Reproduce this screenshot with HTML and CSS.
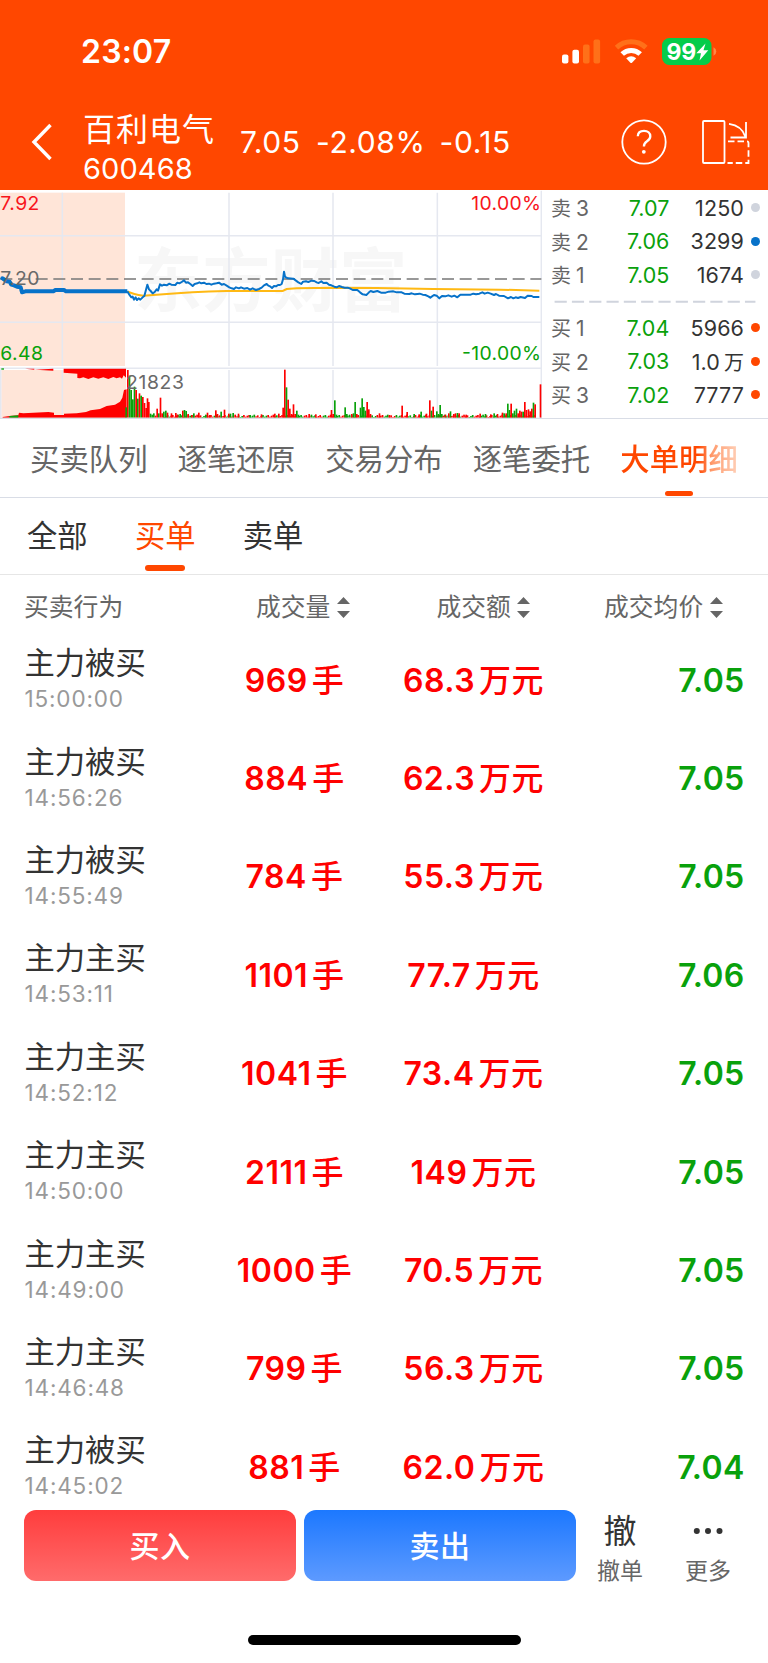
FILE: index.html
```html
<!DOCTYPE html>
<html lang="zh-CN">
<head>
<meta charset="utf-8">
<title>百利电气 600468</title>
<link rel="stylesheet" href="styles.css">
</head>
<body>
<div class="screen">
  <header class="header">
    <div class="status">
      <span class="clock">23:07</span>
      <svg class="status-icons" width="156" height="28" viewBox="0 0 156 28">
        <g fill="#fff"><rect x="0" y="16.500" width="6.400" height="9" rx="2"/><rect x="10.400" y="11.800" width="6.600" height="13.700" rx="2"/></g>
        <g fill="#ff7019"><rect x="21" y="6.500" width="6.600" height="19" rx="2"/><rect x="31.500" y="1.500" width="6.600" height="24" rx="2"/></g>
        <g fill="none" stroke-width="5">
          <path d="M54.500 9.600A21.500 21.500 0 0 1 83.900 9.600" stroke="#ff7019"/>
          <path d="M60.200 16A13 13 0 0 1 78.200 16" stroke="#fff"/>
        </g>
        <path d="M64.200 20.300Q69.200 16 74.200 20.300L70 24.800Q69.200 25.400 68.400 24.800Z" fill="#fff"/>
        <rect x="100" y="0" width="49.500" height="27" rx="7.500" fill="#05cc4a"/>
        <path d="M151.500 9.300Q154.300 10.500 154.300 13.500T151.500 17.700Z" fill="#ff8a45"/>
        <text x="104.600" y="22.300" class="battery-text" textLength="29.500">99</text>
        <path d="M143.500 5.500L134.300 15.300H139L137.500 22.500L146.300 12.200H141.500Z" fill="#fff"/>
      </svg>
    </div>
    <div class="nav">
      <svg class="back" width="22" height="38" viewBox="0 0 22 38"><path d="M19.500 2L3 19L19.500 36" fill="none" stroke="#fff" stroke-width="3.400"/></svg>
      <div class="stock"><div class="stock-name">百利电气</div><div class="stock-code">600468</div></div>
      <div class="quote"><span class="q-price">7.05</span><span class="q-rate">-2.08%</span><span class="q-diff">-0.15</span></div>
      <svg class="help" width="46" height="46" viewBox="0 0 46 46"><circle cx="23" cy="23" r="21.700" fill="none" stroke="#fff" stroke-width="1.800"/><path d="M16.800 17.200C17 13.600 19.500 11.900 23 11.900C26.700 11.900 29.300 14.200 29.300 17.300C29.300 19.700 28 21 26 22.300C23.700 23.800 22.900 24.800 22.900 27.500" fill="none" stroke="#fff" stroke-width="2.300"/><circle cx="22.800" cy="32.800" r="1.900" fill="#fff"/></svg>
      <svg class="rotate" width="50" height="46" viewBox="0 0 50 46"><g fill="none" stroke="#fff" stroke-width="1.800"><rect x="2" y="2" width="21.500" height="42" rx="1"/><path d="M28 4.800Q41 6.500 44.500 18M45 3V18.500H29.500"/><path d="M27 22.300H46Q47.500 22.300 47.500 24V44H26.500" stroke-dasharray="6.500 3"/></g></svg>
    </div>
  </header>

  <section class="market">
    <svg class="chart" width="542" height="229" viewBox="0 12 1626 687">
      <rect x="0" y="20" width="375" height="520" fill="#ffe5d8"/>
      <rect x="4" y="552" width="374" height="143" fill="#ffe5d8"/>
      <text class="mark" x="402" y="360" textLength="820" lengthAdjust="spacingAndGlyphs">东方财富</text>
      <path class="grid" d="M0 149H1623M0 409H1623M0 547H1623M187 20V540M687 20V540M999 20V540M1312 20V540M187 552V695M687 552V695M999 552V695M1312 552V695M1624 14V697M2 550V697"/>
      <path d="M1 279H1624" stroke="#777" stroke-width="4" stroke-dasharray="36 17" fill="none"/>
      <g id="volume"></g>
      <path d="M0 697H1626" class="grid-strong"/>
      <path class="average" d="M382 316Q400 325 430 329Q460 328 490 325Q570 318 680 315H848L860 309L890 307L1000 305L1130 306L1300 309L1500 311L1618 314"/>
      <path class="price" d="M382 316L388 326L394 334L398 332L402 341L407 334L411 342L416 337L421 341L428 334L433 330L442 296L447 310L452 315L458 322L464 318L470 310L474 314L480 295L486 299L492 296L500 298L508 293L514 296L526 297L532 290L538 292L545 288L552 283L558 290L564 289L571 294L578 300L584 294L592 292L598 289L604 292L612 290L619 294L627 293L634 296L642 293L650 292L657 290L665 296L672 294L680 299L688 304L695 307L702 309L708 304L717 307L723 304L732 308L742 306L750 311L758 307L768 312L777 309L785 305L792 298L800 294L805 299L810 301L816 306L822 300L828 301L834 297L840 297L845 294L849 280L852 257L855 272L858 274L864 277L880 278L888 284L895 289L904 294L909 287L918 286L925 288L935 284L943 285L950 289L956 291L964 286L970 291L980 290L987 296L994 298L1003 302L1010 304L1017 300L1026 303L1034 305L1043 305L1051 308L1058 312L1072 312L1080 319L1088 325L1099 327L1107 319L1112 315L1120 318L1132 315L1143 320L1157 320L1166 317L1180 316L1190 319L1205 319L1213 323L1228 324L1235 322L1245 325L1259 323L1268 326L1276 327L1285 331L1291 335L1302 327L1310 329L1318 337L1326 330L1336 331L1345 328L1355 332L1363 329L1372 334L1381 326L1397 326L1412 326L1420 323L1428 325L1438 323L1447 319L1454 323L1463 320L1472 323L1482 327L1488 324L1497 329L1512 330L1524 337L1533 333L1540 337L1547 334L1554 336L1562 333L1575 336L1583 329L1595 330L1600 333L1618 333"/>
      <path class="pre" d="M8 277L20 286L29 287L34 296L42 298L51 302L62 304L66 319L76 316H160L166 312H192L198 316H382"/>
      <circle cx="7" cy="277" r="6" fill="#0772c9"/>
      <g class="axis">
        <text x="1" y="71" textLength="117" fill="#f8151c">7.92</text>
        <text x="1" y="296" textLength="117" fill="#696969">7.20</text>
        <text x="1" y="523" textLength="128" fill="#09a10b">6.48</text>
        <text x="1414" y="71" textLength="209" fill="#f8151c">10.00%</text>
        <text x="1386" y="523" textLength="237" fill="#09a10b">-10.00%</text>
        <text x="378" y="608" textLength="174" fill="#696969">21823</text>
      </g>
    </svg>
    <div class="book">
      <div class="level"><span class="side">卖<i>3</i></span><span class="bid">7.07</span><span class="qty">1250</span><b class="dot"></b></div>
      <div class="level"><span class="side">卖<i>2</i></span><span class="bid">7.06</span><span class="qty">3299</span><b class="dot blue"></b></div>
      <div class="level"><span class="side">卖<i>1</i></span><span class="bid">7.05</span><span class="qty">1674</span><b class="dot"></b></div>
      <svg class="split" width="207" height="20" viewBox="0 0 207 20"><path d="M0 10H206" stroke="#d0d4dd" stroke-width="2" stroke-dasharray="12.500 5.250"/></svg>
      <div class="level"><span class="side">买<i>1</i></span><span class="bid">7.04</span><span class="qty">5966</span><b class="dot hot"></b></div>
      <div class="level"><span class="side">买<i>2</i></span><span class="bid">7.03</span><span class="qty">1.0<em>万</em></span><b class="dot hot"></b></div>
      <div class="level"><span class="side">买<i>3</i></span><span class="bid">7.02</span><span class="qty">7777</span><b class="dot hot"></b></div>
    </div>
  </section>

  <nav class="tabs">
    <span>买卖队列</span><span>逐笔还原</span><span>交易分布</span><span>逐笔委托</span><span class="active">大单明细</span>
  </nav>
  <nav class="filters"><span>全部</span><span class="active">买单</span><span>卖单</span></nav>

  <div class="thead">
    <span>买卖行为</span>
    <span class="sort">成交量<svg width="13" height="21" viewBox="0 0 13 21"><path d="M0 7L6.500 0L13 7ZM0 14H13L6.500 21Z" fill="#666"/></svg></span>
    <span class="sort">成交额<svg width="13" height="21" viewBox="0 0 13 21"><path d="M0 7L6.500 0L13 7ZM0 14H13L6.500 21Z" fill="#666"/></svg></span>
    <span class="sort">成交均价<svg width="13" height="21" viewBox="0 0 13 21"><path d="M0 7L6.500 0L13 7ZM0 14H13L6.500 21Z" fill="#666"/></svg></span>
  </div>
  <main class="list">
    <div class="row"><div class="act"><p>主力被买</p><time>15:00:00</time></div><div class="num">969<u>手</u></div><div class="num">68.3<u>万元</u></div><div class="avg">7.05</div></div>
    <div class="row"><div class="act"><p>主力被买</p><time>14:56:26</time></div><div class="num">884<u>手</u></div><div class="num">62.3<u>万元</u></div><div class="avg">7.05</div></div>
    <div class="row"><div class="act"><p>主力被买</p><time>14:55:49</time></div><div class="num">784<u>手</u></div><div class="num">55.3<u>万元</u></div><div class="avg">7.05</div></div>
    <div class="row"><div class="act"><p>主力主买</p><time>14:53:11</time></div><div class="num">1101<u>手</u></div><div class="num">77.7<u>万元</u></div><div class="avg">7.06</div></div>
    <div class="row"><div class="act"><p>主力主买</p><time>14:52:12</time></div><div class="num">1041<u>手</u></div><div class="num">73.4<u>万元</u></div><div class="avg">7.05</div></div>
    <div class="row"><div class="act"><p>主力主买</p><time>14:50:00</time></div><div class="num">2111<u>手</u></div><div class="num">149<u>万元</u></div><div class="avg">7.05</div></div>
    <div class="row"><div class="act"><p>主力主买</p><time>14:49:00</time></div><div class="num">1000<u>手</u></div><div class="num">70.5<u>万元</u></div><div class="avg">7.05</div></div>
    <div class="row"><div class="act"><p>主力主买</p><time>14:46:48</time></div><div class="num">799<u>手</u></div><div class="num">56.3<u>万元</u></div><div class="avg">7.05</div></div>
    <div class="row"><div class="act"><p>主力被买</p><time>14:45:02</time></div><div class="num">881<u>手</u></div><div class="num">62.0<u>万元</u></div><div class="avg">7.04</div></div>
  </main>

  <footer class="footer">
    <div class="btn buy">买入</div>
    <div class="btn sell">卖出</div>
    <div class="tool cancel"><span class="glyph">撤</span><span>撤单</span></div>
    <div class="tool more"><span class="glyph"><svg width="30" height="8" viewBox="0 0 30 8"><g fill="#333"><circle cx="3.800" cy="4" r="3"/><circle cx="15" cy="4" r="3"/><circle cx="26.500" cy="4" r="3"/></g></svg></span><span>更多</span></div>
  </footer>
  <div class="home"></div>
</div>
<script src="chart.js"></script>
</body>
</html>
```

FILE: styles.css
```css
* { box-sizing: border-box; }
body {
  margin: 0;
  background: #fff;
  color: #333;
  font-family: Inter, "Noto Sans CJK SC", sans-serif;
}
p { margin: 0; }
i, em { font-style: normal; }
u { text-decoration: none; }
.screen { width: 768px; height: 1663px; overflow: hidden; display: flex; flex-direction: column; background: #fff; }

.header { height: 190px; flex: none; background: #ff4700; color: #fff; }
.status { height: 102px; padding: 37px 50px 0 81px; display: flex; justify-content: space-between; align-items: flex-start; }
.clock { font-size: 32px; line-height: 30px; font-weight: 600; letter-spacing: .2px; }
.status-icons { margin-top: .5px; }
.battery-text { font: 700 23px Inter, sans-serif; fill: #fff; }
.nav { display: flex; height: 88px; align-items: flex-start; }
.back { margin: 21px 0 0 31px; }
.stock { margin: 10px 0 0 30px; width: 149px; }
.stock-name { font-size: 32px; line-height: 36px; letter-spacing: 1px; white-space: nowrap; }
.stock-code { font-size: 29px; line-height: 36px; margin-top: 3px; letter-spacing: .1px; }
.quote { display: flex; font-size: 30px; line-height: 36px; margin-top: 22px; width: 389px; padding-left: 8px; white-space: nowrap; letter-spacing: .6px; }
.q-price { width: 76px; }
.q-rate { width: 123.500px; }
.help { margin-top: 17px; }
.rotate { margin: 17px 0 0 34px; }

.market { height: 229px; flex: none; display: flex; }
.chart { flex: none; display: block; }
.grid { fill: none; stroke: #e5e8f0; stroke-width: 4.500; }
.grid-strong { fill: none; stroke: #dadde6; stroke-width: 3.500; }
.mark { font: 700 208px "Noto Sans CJK SC", sans-serif; fill: #f7f7f7; }
.average { fill: none; stroke: #ffb914; stroke-width: 6; }
.price { fill: none; stroke: #0772c9; stroke-width: 6; stroke-linejoin: round; }
.pre { fill: none; stroke: #0772c9; stroke-width: 12; stroke-linejoin: round; }
.axis { font: 400 58px Inter, sans-serif; }
.book { flex: 1; padding: 1px 7px 0 10px; border-bottom: 1px solid #d9dde6; }
.level { display: grid; grid-template-columns: 47px 70.500px 74.500px 15px; height: 33.5px; align-items: center; font-size: 21.5px; white-space: nowrap; }
.bid, .qty { letter-spacing: .1px; }
.side { color: #666; font-size: 20px; margin-left: -1px; }
.side i { margin-left: 5px; font-size: 21px; }
.bid { color: #09a10b; text-align: right; }
.qty { text-align: right; }
.qty em { font-size: 20px; margin-left: 4px; }
.dot { width: 9.400px; height: 9.400px; border-radius: 50%; background: #d0d4dd; justify-self: end; margin-right: -1px; }
.blue { background: #0772c9; }
.hot { background: #ff4700; }
.split { display: block; height: 19.500px; }

.tabs { height: 78.500px; flex: none; display: flex; gap: 30px; padding: 21px 0 0 30px; border-bottom: 1.500px solid #d9dde6; font-size: 29.400px; line-height: 40px; color: #666; white-space: nowrap; }
.tabs .active { position: relative; font-weight: 500; color: transparent; background: linear-gradient(90deg, #ff4700 66%, #ff9a6c 78%, #ffd0b8); background-clip: text; -webkit-background-clip: text; }
.tabs .active::after, .filters .active::after { content: ""; position: absolute; border-radius: 3px; background: #ff4700; }
.tabs .active::after { width: 28px; height: 4.500px; left: 45px; top: 51px; }
.filters { height: 77.500px; flex: none; display: flex; gap: 47.300px; padding: 18px 0 0 27px; border-bottom: 1px solid #e6e6e6; font-size: 30.300px; line-height: 40px; }
.filters .active { color: #ff4700; position: relative; }
.filters .active::after { width: 40px; height: 6.500px; left: 10.500px; top: 49px; }

.thead { height: 55px; flex: none; display: grid; grid-template-columns: 232px 180.500px 167.500px 1fr; padding: 0 0 0 24px; font-size: 24.800px; line-height: 65px; color: #666; }
.sort { display: flex; align-items: center; height: 65px; gap: 6.500px; }
.list { height: 877px; flex: none; overflow: hidden; }
.row { height: 98.400px; display: grid; grid-template-columns: 174px 191px 167px 1fr; align-items: center; padding: 0 23.500px 0 25px; }
.act { margin: -1px 0 0 -.5px; white-space: nowrap; }
.act p { font-size: 30.300px; line-height: 40px; }
.act time { display: block; font-size: 22.500px; line-height: 30px; color: #999; margin-top: 1px; letter-spacing: .85px; }
.num { color: #f00; font-size: 32px; font-weight: 600; line-height: 40px; justify-self: center; display: flex; white-space: nowrap; letter-spacing: .5px; margin: 3px -60px 0; }
.num u { font-size: 32px; margin-left: 4px; font-weight: 500; }
.avg { color: #09a10b; font-size: 32px; font-weight: 600; line-height: 40px; text-align: right; letter-spacing: .3px; margin-top: 3px; }

.footer { height: 80px; flex: none; padding: 3px 0 0 24px; display: flex; }
.btn { width: 272px; height: 71px; border-radius: 12px; margin-right: 8px; color: #fff; font-size: 30px; font-weight: 500; text-align: center; line-height: 72px; letter-spacing: .4px; }
.buy { background: linear-gradient(#ff3d3d, #ff6b6b); }
.sell { background: linear-gradient(#1c78ff, #5d9aff); }
.tool { width: 88px; display: flex; flex-direction: column; align-items: center; font-size: 23px; line-height: 38px; color: #666; }
.tool.cancel { margin-left: -8px; }
.cancel .glyph { color: #333; font-size: 33px; }
.glyph { height: 42px; flex: none; line-height: 42px; display: flex; align-items: center; }
.home { width: 273.500px; height: 10px; border-radius: 5px; background: #000; margin: 48px 0 0 247.500px; flex: none; }
```

FILE: chart.js
```js
// Volume panel: baseline y = 695, x and y in chart units.
var RED = '#fe0000', GREEN = '#09a10b', BASE = 695, STEP = 5.2;
var out = '';

function area(points, color) {
  out += '<polygon points="' + points + '" fill="' + color + '"/>';
}
function bar(x, top, color) {
  out += '<rect x="' + x.toFixed(1) + '" y="' + top + '" width="5" height="' + (BASE - top) + '" fill="' + color + '"/>';
}

// Call auction: matched volume below, unmatched volume hanging from the top
area('8,695 8,693 28,690 55,688 57,680 70,682 100,680 145,678 162,680 162,687 192,687 192,683 230,682 258,678 272,673 300,669 320,660 345,656 360,647 367,635 372,612 380,610 380,695', RED);
area('28,695 28,690 55,688 55,695', GREEN);
area('75,548 103,548 103,551 160,548 160,554 120,552 103,551', RED);
area('191,548 378,548 378,575 371,568 366,578 360,574 350,577 340,573 325,579 310,574 295,578 280,574 265,579 250,574 240,577 232,576 232,563 191,560', RED);
area('4,547 12,547 12,551 4,551', GREEN);

// Minute bars: [x, top, colour]
var peaks = [
  [376,664,0],[381,552,1],[386,569,0],[391,612,0],[396,640,0],[401,602,0],[406,612,1],[411,638,0],
  [416,622,1],[421,629,0],[426,633,1],[431,651,1],[436,666,1],[440,637,1],[444,648,1],[449,683,0],
  [454,686,0],[459,682,0],[464,689,1],[469,668,1],[474,682,0],[479,635,1],[484,682,1],[489,677,0],
  [495,674,0],[500,680,1],[512,682,1],[525,681,1],[530,686,1],[538,684,0],[546,674,1],[551,672,0],
  [556,675,0],[562,684,1],[573,687,1],[579,682,0],[594,680,1],[615,686,0],[620,680,1],[627,687,1],
  [645,673,1],[650,684,1],[661,677,0],[671,671,1],[684,683,1],[689,683,0],[697,681,0],[713,683,1],
  [748,687,0],[782,685,1],[822,683,1],[834,683,1],[847,665,1],[852,551,1],[857,604,0],[862,641,1],
  [867,668,1],[872,684,1],[878,655,1],[883,684,1],[888,674,0],[893,686,0],[925,684,1],[945,685,1],
  [992,672,1],[997,684,1],[1002,643,0],[1007,686,0],[1033,664,0],[1038,684,0],[1053,684,1],[1058,682,0],
  [1063,648,0],[1068,684,1],[1079,665,0],[1084,637,0],[1089,663,0],[1094,674,0],[1099,648,1],[1104,670,1],
  [1109,684,1],[1136,682,1],[1166,687,1],[1204,659,1],[1219,678,1],[1240,684,0],[1255,685,1],[1261,677,0],
  [1277,683,1],[1287,643,1],[1292,674,0],[1297,662,1],[1308,676,0],[1313,684,0],[1318,657,0],[1323,684,0],
  [1334,686,1],[1344,682,1],[1349,676,0],[1359,684,1],[1364,682,1],[1370,681,0],[1375,682,1],[1396,686,1],
  [1438,683,1],[1454,684,0],[1470,685,1],[1480,682,0],[1490,684,1],[1505,680,1],[1510,682,0],[1516,682,1],
  [1521,653,0],[1526,672,0],[1531,653,1],[1536,682,0],[1541,674,0],[1547,668,0],[1552,682,1],[1557,674,1],
  [1562,677,1],[1567,677,0],[1572,648,1],[1577,672,1],[1583,670,1],[1588,676,1],[1593,668,1],[1598,650,0],
  [1603,655,1],[1619,595,1]
];
// Quiet minutes between the peaks
for (var i = 0; i < 215; i++) {
  var x = 490 + i * STEP;
  if (x > 1610) break;
  var h = 2 + (i * 37 % 11) * 0.7;
  bar(x, BASE - Math.round(h), (i * 13 % 7) < 4 ? RED : GREEN);
}
peaks.forEach(function (p) { bar(p[0], p[1], p[2] ? RED : GREEN); });
document.getElementById('volume').innerHTML = out;
```
